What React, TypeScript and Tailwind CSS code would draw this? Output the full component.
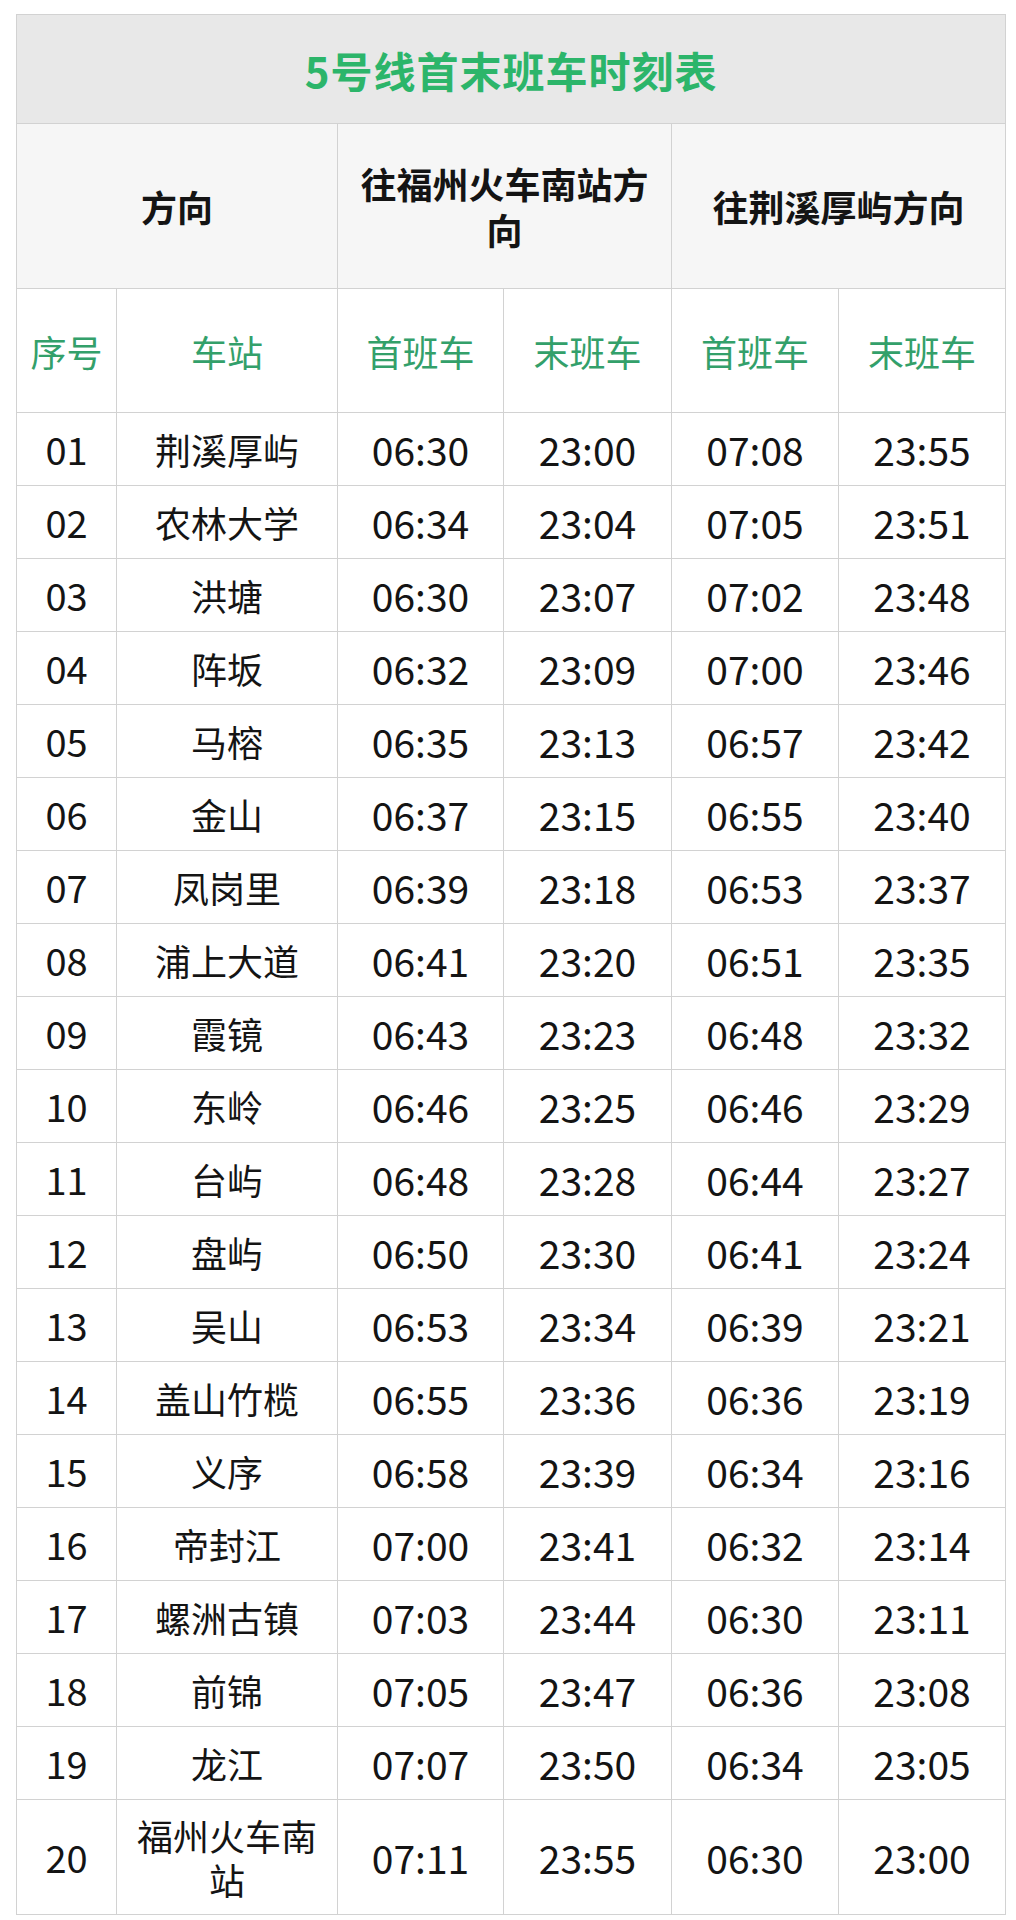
const ROWS: [string, string, string, string, string, string][] = [
  ["01", "荆溪厚屿", "06:30", "23:00", "07:08", "23:55"],
  ["02", "农林大学", "06:34", "23:04", "07:05", "23:51"],
  ["03", "洪塘", "06:30", "23:07", "07:02", "23:48"],
  ["04", "阵坂", "06:32", "23:09", "07:00", "23:46"],
  ["05", "马榕", "06:35", "23:13", "06:57", "23:42"],
  ["06", "金山", "06:37", "23:15", "06:55", "23:40"],
  ["07", "凤岗里", "06:39", "23:18", "06:53", "23:37"],
  ["08", "浦上大道", "06:41", "23:20", "06:51", "23:35"],
  ["09", "霞镜", "06:43", "23:23", "06:48", "23:32"],
  ["10", "东岭", "06:46", "23:25", "06:46", "23:29"],
  ["11", "台屿", "06:48", "23:28", "06:44", "23:27"],
  ["12", "盘屿", "06:50", "23:30", "06:41", "23:24"],
  ["13", "吴山", "06:53", "23:34", "06:39", "23:21"],
  ["14", "盖山竹榄", "06:55", "23:36", "06:36", "23:19"],
  ["15", "义序", "06:58", "23:39", "06:34", "23:16"],
  ["16", "帝封江", "07:00", "23:41", "06:32", "23:14"],
  ["17", "螺洲古镇", "07:03", "23:44", "06:30", "23:11"],
  ["18", "前锦", "07:05", "23:47", "06:36", "23:08"],
  ["19", "龙江", "07:07", "23:50", "06:34", "23:05"],
  ["20", "福州火车南站", "07:11", "23:55", "06:30", "23:00"],
];

const cell = "border border-[#d2d2d2] text-center align-middle p-0";

export default function App() {
  return (
    <div
      className="min-h-[1920px] bg-white pt-[14px] pl-[16px]"
      style={{ fontFamily: '"Noto Sans CJK SC", "Noto Sans", sans-serif' }}
    >
      <table className="w-[989px] table-fixed border-collapse text-[#141414]">
        <colgroup>
          <col className="w-[100px]" />
          <col className="w-[221px]" />
          <col className="w-[166px]" />
          <col className="w-[168px]" />
          <col className="w-[167px]" />
          <col className="w-[167px]" />
        </colgroup>
        <tbody>
          {/* title */}
          <tr className="h-[109px] bg-[#e8e8e8]">
            <td colSpan={6} className={`${cell} text-[42px] font-bold tracking-[1px] text-[#2cb56a]`}>
              5号线首末班车时刻表
            </td>
          </tr>

          {/* direction */}
          <tr className="h-[165px] bg-[#f6f6f6] text-[36px] font-bold leading-[46px]">
            <td colSpan={2} className={cell}>方向</td>
            <td colSpan={2} className={`${cell} px-[18px]`}>往福州火车南站方向</td>
            <td colSpan={2} className={`${cell} px-[18px]`}>往荆溪厚屿方向</td>
          </tr>

          {/* column headings */}
          <tr className="h-[124px] text-[36px] text-[#33a06a]">
            <td className={cell}>序号</td>
            <td className={cell}>车站</td>
            <td className={cell}>首班车</td>
            <td className={cell}>末班车</td>
            <td className={cell}>首班车</td>
            <td className={cell}>末班车</td>
          </tr>

          {ROWS.map((r, i) => (
            <tr
              key={r[0]}
              className={`${i === ROWS.length - 1 ? "h-[115px]" : "h-[73px]"} text-[36px] leading-[44px]`}
            >
              <td className={`${cell} text-[38px]`}>{r[0]}</td>
              <td className={`${cell} px-[12px]`}>{r[1]}</td>
              <td className={`${cell} text-[39px]`}>{r[2]}</td>
              <td className={`${cell} text-[39px]`}>{r[3]}</td>
              <td className={`${cell} text-[39px]`}>{r[4]}</td>
              <td className={`${cell} text-[39px]`}>{r[5]}</td>
            </tr>
          ))}
        </tbody>
      </table>
    </div>
  );
}
